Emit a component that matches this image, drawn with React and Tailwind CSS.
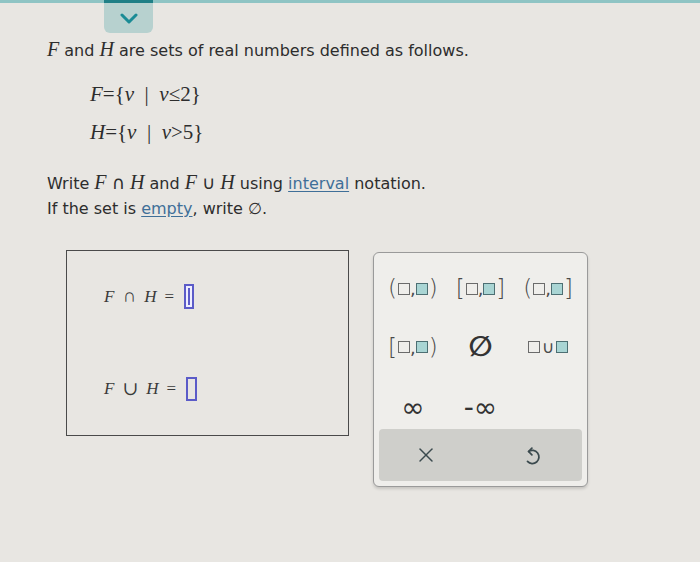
import { X } from 'lucide-react';

const math = { fontFamily: '"Liberation Serif", "DejaVu Serif", serif' };

const Sq = ({ fill }) => (
  <span
    className={`inline-block w-[12px] h-[12px] border-[1.5px] ${fill ? 'bg-[#a9d5d4] border-[#4d6f73]' : 'bg-transparent border-[#6b6b6b]'} mx-[1px]`}
  />
);

const Interval = ({ l, r }) => (
  <span className="flex items-center text-[23px] leading-none text-[#4a4a4a]">
    <span className="font-light">{l}</span>
    <Sq />
    <span className="text-[18px] -mx-[1px] self-end mb-[2px]">,</span>
    <Sq fill />
    <span className="font-light">{r}</span>
  </span>
);

const I = ({ children }) => <span className="italic text-[20px]" style={math}>{children}</span>;

export default function App() {
  return (
    <div className="w-[700px] h-[562px] bg-[#e8e6e2] relative overflow-hidden text-[#2d2d2d]" style={{ fontFamily: '"DejaVu Sans", Verdana, sans-serif' }}>
      <div className="h-[3px] bg-[#8fc4c4]" />
      <div className="absolute left-[104px] top-0 w-[49px] h-[33px] rounded-b-[6px] bg-[#b7d1cf] flex items-center justify-center">
        <div className="absolute top-0 left-0 right-0 h-[3px] bg-[#1f7f86]" />
        <svg width="18" height="11" viewBox="0 0 18 11" className="mt-[4px]">
          <path d="M2 2 L9 9 L16 2" fill="none" stroke="#1a8b95" strokeWidth="3" strokeLinecap="round" strokeLinejoin="round" />
        </svg>
      </div>

      <div className="pl-[47px] pt-[34px]">
        <p className="text-[16px] leading-[24px]">
          <I>F</I> and <I>H</I> are sets of real numbers defined as follows.
        </p>
        <div className="pl-[43px] mt-[18px] text-[21px] leading-[26px] flex flex-col gap-[12px]" style={math}>
          <div>
            <i>F</i>=&#123;<i>v</i> &nbsp;|&nbsp; <i>v</i>≤2&#125;
          </div>
          <div>
            <i>H</i>=&#123;<i>v</i> &nbsp;|&nbsp; <i>v</i>&gt;5&#125;
          </div>
        </div>
        <p className="text-[16px] leading-[24px] mt-[25px]">
          Write <I>F</I> <span className="text-[18px]">∩</span> <I>H</I> and <I>F</I> <span className="text-[18px]">∪</span> <I>H</I> using{' '}
          <span className="text-[#3f6f98] underline underline-offset-2">interval</span> notation.
        </p>
        <p className="text-[16px] leading-[24px] mt-[1px]">
          If the set is <span className="text-[#3f6f98] underline underline-offset-2">empty</span>, write ∅.
        </p>
      </div>

      <div className="flex items-start mt-[29px]">
        <div className="ml-[66px] w-[283px] h-[186px] border border-[#4a4a4a] flex flex-col pl-[37px] pt-[31px] gap-[64px] text-[17px]" style={math}>
          <div className="flex items-center gap-[8px] italic text-[#3a3a3a]">
            <span>F</span><span className="not-italic text-[19px]">∩</span><span>H</span><span className="not-italic">=</span>
            <span className="relative w-[10px] h-[25px] border-[2px] border-[#5b5bc8] bg-[#eef] ml-[2px]">
              <span className="absolute left-[2px] top-[2px] bottom-[2px] w-[2px] bg-[#5b5bc8]" />
            </span>
          </div>
          <div className="flex items-center gap-[8px] italic text-[#3a3a3a]">
            <span>F</span><span className="not-italic text-[19px]">∪</span><span>H</span><span className="not-italic">=</span>
            <span className="w-[11px] h-[24px] border-[2px] border-[#5b5bc8] ml-[2px]" />
          </div>
        </div>

        <div className="ml-[24px] mt-[2px] w-[215px] h-[235px] rounded-[6px] border border-[#9a9a9a] bg-[#efeeeb] shadow-[0_2px_3px_rgba(0,0,0,0.15)] flex flex-col p-[5px]">
          <div className="grid grid-cols-3 items-center justify-items-center pt-[19px] gap-y-[33px]">
            <Interval l="(" r=")" />
            <Interval l="[" r="]" />
            <Interval l="(" r="]" />
            <Interval l="[" r=")" />
            <span className="text-[28px] leading-none text-[#333] font-bold">∅</span>
            <span className="flex items-center text-[#4a4a4a] text-[17px] leading-none">
              <Sq /><span className="mx-[1px]">∪</span><Sq fill />
            </span>
            <span className="text-[28px] leading-none text-[#333]">∞</span>
            <span className="text-[28px] leading-none text-[#333]">-∞</span>
            <span />
          </div>
          <div className="mt-auto h-[52px] rounded-[4px] bg-[#cfcfcb] flex items-center justify-around">
            <X size={24} strokeWidth={1.5} className="text-[#3b4a4e] -ml-[4px]" />
            <svg width="20" height="22" viewBox="0 0 18 20" className="mt-[4px] ml-[6px]">
              <path d="M5 5 A6 6 0 1 1 4 14" fill="none" stroke="#3b4a4e" strokeWidth="1.6" strokeLinecap="round" />
              <path d="M8 2 L5 5 L8 8" fill="none" stroke="#3b4a4e" strokeWidth="1.6" strokeLinecap="round" strokeLinejoin="round" />
            </svg>
          </div>
        </div>
      </div>
    </div>
  );
}
